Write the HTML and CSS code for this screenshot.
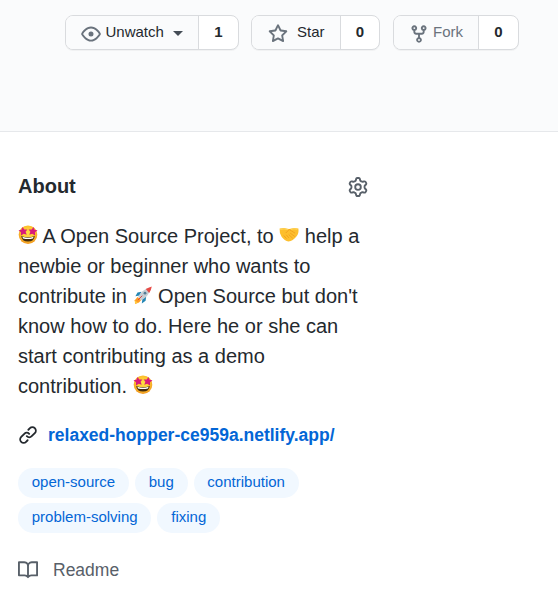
FILE: index.html
```html
<!DOCTYPE html>
<html lang="en">
<head>
<meta charset="utf-8">
<title>Repository</title>
<link rel="stylesheet" href="styles.css">
</head>
<body>
<svg class="defs" width="0" height="0">
  <defs>
    <radialGradient id="face" cx=".5" cy=".42" r=".58"><stop offset="0" stop-color="#ffdf45"/><stop offset=".6" stop-color="#fdc52f"/><stop offset="1" stop-color="#f19720"/></radialGradient>
    <symbol id="star-struck" viewBox="0 0 20 20">
      <circle cx="10" cy="9.7" r="9.3" fill="url(#face)"/>
      <path d="M3.2 11Q10 13.4 16.8 11Q16.2 16.6 10 16.6T3.2 11z" fill="#422b0d"/>
      <path d="M4.4 11.7Q10 13.6 15.6 11.7L15 13.4Q10 14.8 5 13.4z" fill="#fff"/>
      <path d="M4.6 2L6.3 4.5 9.4 4.4 7.6 6.8 8.7 9.8 5.8 8.8 3 10.6 3 7.3.5 5.3 3.5 4.7z" fill="#d81b7a"/>
      <path d="M15.4 2L13.7 4.5 10.6 4.4 12.4 6.8 11.3 9.8 14.2 8.8 17 10.6 17 7.3 19.5 5.3 16.5 4.7z" fill="#d81b7a"/>
    </symbol>
  </defs>
</svg>
<header class="repo-header">
  <div class="btn-group watch">
    <button class="btn"><svg class="icon" viewBox="0 0 16 16"><path d="M1.679 7.932c.412-.621 1.242-1.75 2.366-2.717C5.175 4.242 6.527 3.5 8 3.5c1.473 0 2.824.742 3.955 1.715 1.124.967 1.954 2.096 2.366 2.717a.119.119 0 010 .136c-.412.621-1.242 1.75-2.366 2.717C10.825 11.758 9.473 12.5 8 12.5c-1.473 0-2.824-.742-3.955-1.715C2.92 9.818 2.09 8.69 1.679 8.068a.119.119 0 010-.136zM8 2c-1.981 0-3.67.992-4.933 2.078C1.797 5.169.88 6.423.43 7.1a1.619 1.619 0 000 1.798c.45.678 1.367 1.932 2.637 3.024C4.329 13.008 6.019 14 8 14c1.981 0 3.67-.992 4.933-2.078 1.27-1.091 2.187-2.345 2.637-3.023a1.619 1.619 0 000-1.798c-.45-.678-1.367-1.932-2.637-3.023C11.671 2.992 9.981 2 8 2zm0 8a2 2 0 100-4 2 2 0 000 4z"/></svg><span>Unwatch</span><i class="caret"></i></button>
    <a class="count">1</a>
  </div>
  <div class="btn-group star">
    <button class="btn"><svg class="icon" viewBox="0 0 16 16"><path d="M8 .25a.75.75 0 01.673.418l1.882 3.815 4.21.612a.75.75 0 01.416 1.279l-3.046 2.97.719 4.192a.75.75 0 01-1.088.791L8 12.347l-3.766 1.98a.75.75 0 01-1.088-.79l.72-4.194L.818 6.374a.75.75 0 01.416-1.28l4.21-.611L7.327.668A.75.75 0 018 .25zm0 2.445L6.615 5.5a.75.75 0 01-.564.41l-3.097.45 2.24 2.184a.75.75 0 01.216.664l-.528 3.084 2.769-1.456a.75.75 0 01.698 0l2.77 1.456-.53-3.084a.75.75 0 01.216-.664l2.24-2.183-3.096-.45a.75.75 0 01-.564-.41L8 2.694v.001z"/></svg><span>Star</span></button>
    <a class="count">0</a>
  </div>
  <div class="btn-group fork">
    <button class="btn"><svg class="icon" viewBox="0 0 16 16"><path d="M5 3.25a.75.75 0 11-1.5 0 .75.75 0 011.5 0zm0 2.122a2.25 2.25 0 10-1.5 0v.878A2.25 2.25 0 005.75 8.5h1.5v2.128a2.251 2.251 0 101.5 0V8.5h1.5a2.25 2.25 0 002.25-2.25v-.878a2.25 2.25 0 10-1.5 0v.878a.75.75 0 01-.75.75h-4.5A.75.75 0 015 6.25v-.878zm3.75 7.378a.75.75 0 11-1.5 0 .75.75 0 011.5 0zm3-8.75a.75.75 0 100-1.5.75.75 0 000 1.5z"/></svg><span>Fork</span></button>
    <a class="count">0</a>
  </div>
</header>
<main class="about">
  <div class="about-head">
    <h2>About</h2>
    <svg class="icon" viewBox="0 0 16 16"><path fill-rule="evenodd" d="M7.429 1.525a6.593 6.593 0 011.142 0c.036.003.108.036.137.146l.289 1.105c.147.56.55.967.997 1.189.174.086.341.183.501.29.417.278.97.423 1.53.27l1.102-.303c.11-.03.175.016.195.046.219.31.41.641.573.989.014.031.022.11-.059.19l-.815.806c-.411.406-.562.957-.53 1.456a4.588 4.588 0 010 .582c-.032.499.119 1.05.53 1.456l.815.806c.08.08.073.159.059.19a6.494 6.494 0 01-.573.99c-.02.029-.086.074-.195.045l-1.103-.303c-.559-.153-1.112-.008-1.529.27-.16.107-.327.204-.5.29-.449.222-.851.628-.998 1.189l-.289 1.105c-.029.11-.101.143-.137.146a6.613 6.613 0 01-1.142 0c-.036-.003-.108-.037-.137-.146l-.289-1.105c-.147-.56-.55-.967-.997-1.189a4.502 4.502 0 01-.501-.29c-.417-.278-.97-.423-1.53-.27l-1.102.303c-.11.03-.175-.016-.195-.046a6.492 6.492 0 01-.573-.989c-.014-.031-.022-.11.059-.19l.815-.806c.411-.406.562-.957.53-1.456a4.587 4.587 0 010-.582c.032-.499-.119-1.05-.53-1.456l-.815-.806c-.08-.08-.073-.159-.059-.19a6.44 6.44 0 01.573-.99c.02-.029.086-.075.195-.045l1.103.303c.559.153 1.112.008 1.529-.27.16-.107.327-.204.5-.29.449-.222.851-.628.998-1.189l.289-1.105c.029-.11.101-.143.137-.146zM8 0c-.236 0-.47.01-.701.03-.743.065-1.29.615-1.458 1.261l-.29 1.106c-.017.066-.078.158-.211.224a5.994 5.994 0 00-.668.386c-.123.082-.233.09-.3.071L3.27 2.776c-.644-.177-1.392.02-1.82.63a7.977 7.977 0 00-.704 1.217c-.315.675-.111 1.422.363 1.891l.815.806c.05.048.098.147.088.294a6.084 6.084 0 000 .772c.01.147-.038.246-.088.294l-.815.806c-.474.469-.678 1.216-.363 1.891.2.428.436.835.704 1.218.428.609 1.176.806 1.82.63l1.103-.303c.066-.019.176-.011.299.071.213.143.436.272.668.386.133.066.194.158.212.224l.289 1.106c.169.646.715 1.196 1.458 1.26a8.094 8.094 0 001.402 0c.743-.064 1.29-.614 1.458-1.26l.29-1.106c.017-.066.078-.158.211-.224a5.98 5.98 0 00.668-.386c.123-.082.233-.09.3-.071l1.102.302c.644.177 1.392-.02 1.82-.63.268-.382.505-.789.704-1.217.315-.675.111-1.422-.364-1.891l-.814-.806c-.05-.048-.098-.147-.088-.294a6.1 6.1 0 000-.772c-.01-.147.039-.246.088-.294l.814-.806c.475-.469.679-1.216.364-1.891a7.992 7.992 0 00-.704-1.218c-.428-.609-1.176-.806-1.82-.63l-1.103.303c-.066.019-.176.011-.299-.071a5.991 5.991 0 00-.668-.386c-.133-.066-.194-.158-.212-.224L10.16 1.29C9.99.645 9.444.095 8.701.031A8.094 8.094 0 008 0zm1.5 8a1.5 1.5 0 11-3 0 1.5 1.5 0 013 0zM11 8a3 3 0 11-6 0 3 3 0 016 0z"/></svg>
  </div>
  <p class="description"><svg class="emoji"><use href="#star-struck"/></svg> A Open Source Project, to <svg class="emoji" viewBox="0 .7 20 20"><path d="M.6 4.3L5 3.6 10 4.6 15 3.6 19.4 4.3Q20 9.5 17.6 12Q14 16.8 9.5 17.2Q5.5 16.5 2.6 12.5Q.2 9 .6 4.3z" fill="#fdbf2d"/><path d="M7 8.5L10.2 5.2 15.8 8.7M5 11.5L7.2 14M7.5 10.8L9.5 13.2M11.5 9L15.5 12M10 10.5L13.5 13.8" fill="none" stroke="#ef9a1b" stroke-width=".8" stroke-linecap="round"/><path d="M1.2 5.2L5 4.6 9 5.4M12 5.1L15 4.5 18.4 5" fill="none" stroke="#ffd65a"/></svg> help a newbie or beginner who wants to contribute in <svg class="emoji" viewBox="0 0 20 20"><path d="M4.5 12L1.8 15.2 2.2 19 6 17.4 8.2 15z" fill="#ff9b24"/><path d="M1.8 15.2L2 18.8 5 17.8z" fill="#ffcb3c"/><path d="M8.5 6.8L4.5 7.5 2.4 11.2 6.6 10.5zM13.2 11.5L12.6 15.8 8.8 18.6 9.4 14z" fill="#2386b4"/><path d="M5.2 12.1Q8 4.8 17.8 2.2Q16.5 11 8.3 15.2z" fill="#c5cdd3"/><path d="M12.8 4.1Q15.3 2.5 18.8 1.5Q18.2 5 16.2 7.9z" fill="#e84b46"/><circle cx="12" cy="8.2" r="1.4" fill="#547d96"/><path d="M9 11L5.2 14.8" stroke="#d84443" stroke-width="1" stroke-linecap="round"/></svg> Open Source but don't know how to do. Here he or she can start contributing as a demo contribution. <svg class="emoji"><use href="#star-struck"/></svg></p>
  <div class="website">
    <svg class="icon" viewBox="0 0 16 16"><path d="M7.775 3.275a.75.75 0 001.06 1.06l1.25-1.25a2 2 0 112.83 2.83l-2.5 2.5a2 2 0 01-2.83 0 .75.75 0 00-1.06 1.06 3.5 3.5 0 004.95 0l2.5-2.5a3.5 3.5 0 00-4.95-4.95l-1.25 1.25zm-4.69 9.64a2 2 0 010-2.83l2.5-2.5a2 2 0 012.83 0 .75.75 0 001.06-1.06 3.5 3.5 0 00-4.95 0l-2.5 2.5a3.5 3.5 0 004.95 4.95l1.25-1.25a.75.75 0 00-1.06-1.06l-1.25 1.25a2 2 0 01-2.83 0z"/></svg>
    <a>relaxed-hopper-ce959a.netlify.app/</a>
  </div>
  <div class="topics">
    <a class="topic">open-source</a>
    <a class="topic">bug</a>
    <a class="topic">contribution</a>
    <a class="topic">problem-solving</a>
    <a class="topic">fixing</a>
  </div>
  <div class="readme">
    <svg class="icon" viewBox="0 0 16 16"><path fill-rule="evenodd" d="M0 1.75A.75.75 0 01.75 1h4.253c1.227 0 2.317.59 3 1.501A3.744 3.744 0 0111.006 1h4.245a.75.75 0 01.75.75v10.5a.75.75 0 01-.75.75h-4.507a2.25 2.25 0 00-1.591.659l-.622.621a.75.75 0 01-1.06 0l-.622-.621A2.25 2.25 0 005.258 13H.75a.75.75 0 01-.75-.75V1.75zm8.755 3a2.25 2.25 0 012.25-2.25H14.5v9h-3.757c-.71 0-1.4.201-1.992.572l.004-7.322zm-1.504 7.324l.004-5.073-.002-2.253A2.25 2.25 0 005.003 2.5H1.5v9h3.757a3.75 3.75 0 011.994.574z"/></svg>
    <a>Readme</a>
  </div>
</main>
</body>
</html>
```
FILE: styles.css
```css
* { box-sizing: border-box; }
body {
  margin: 0;
  background: #fff;
  color: #24292e;
  font-family: "Liberation Sans", Arial, sans-serif;
}
.defs { display: block; height: 0; }
.icon { display: block; flex: none; width: 20px; height: 20px; fill: #586069; fill-rule: evenodd; }
.repo-header {
  display: flex;
  align-items: flex-start;
  height: 132px;
  padding: 15px 0 0 65px;
  background: #fafbfc;
  border-bottom: 1px solid #e6e8eb;
}
.btn-group {
  display: flex;
  height: 35px;
  border: 1px solid #d9dbde;
  border-radius: 8px;
  overflow: hidden;
  background: #fff;
  box-shadow: 0 1px 0 rgba(27, 31, 35, .04);
}
.watch { width: 174px; margin-right: 12px; }
.star { width: 129px; margin-right: 13px; }
.fork { width: 126px; }
.btn {
  display: flex;
  flex: 1;
  align-items: center;
  padding: 0 0 0 15px;
  border: 0;
  border-right: 1px solid #d9dbde;
  background: #fafbfc;
  color: #24292e;
  font: 15px/30px "Liberation Sans", Arial, sans-serif;
}
.btn .icon { margin-top: 3px; fill: #6a737d; }
.btn span { margin-bottom: 2px; }
.watch .btn span { margin-left: 4.5px; }
.star .btn { padding-left: 16px; }
.star .btn span { margin-left: 9px; }
.fork .btn span { margin-left: 4px; color: #6a737d; }
.caret {
  margin: 2px 0 0 9.5px;
  border: 5px solid transparent;
  border-top-color: #444d56;
  border-bottom: 0;
}
.count {
  width: 39px;
  text-align: center;
  font: bold 15px/31px "Liberation Sans", Arial, sans-serif;
}
.star .count { width: 38px; }
.about { width: 368px; padding: 39px 0 0 18px; }
.about-head { display: flex; justify-content: space-between; align-items: center; height: 30px; }
.about-head .icon { margin-top: 2px; }
h2 { margin: 0; font-size: 20px; line-height: 30px; }
.description { margin: 20px 0 0; font-size: 20px; line-height: 30px; }
.emoji { display: inline-block; width: 20px; height: 20px; vertical-align: -2px; }
.website { display: flex; align-items: center; height: 30px; margin-top: 19px; }
.website .icon { fill: #24292e; }
.website a { margin-left: 10px; color: #0366d6; font-size: 17.5px; font-weight: bold; }
.topics { display: flex; flex-wrap: wrap; gap: 4.5px 6.1px; margin-top: 18px; }
.topic {
  height: 30px;
  padding: 0 13.75px;
  border-radius: 15px;
  background: #f1f8ff;
  color: #0366d6;
  font-size: 15px;
  line-height: 28px;
}
.readme { display: flex; align-items: center; margin-top: 23.5px; height: 28px; }
.readme a { margin-left: 15px; color: #586069; font-size: 17.5px; }
```
